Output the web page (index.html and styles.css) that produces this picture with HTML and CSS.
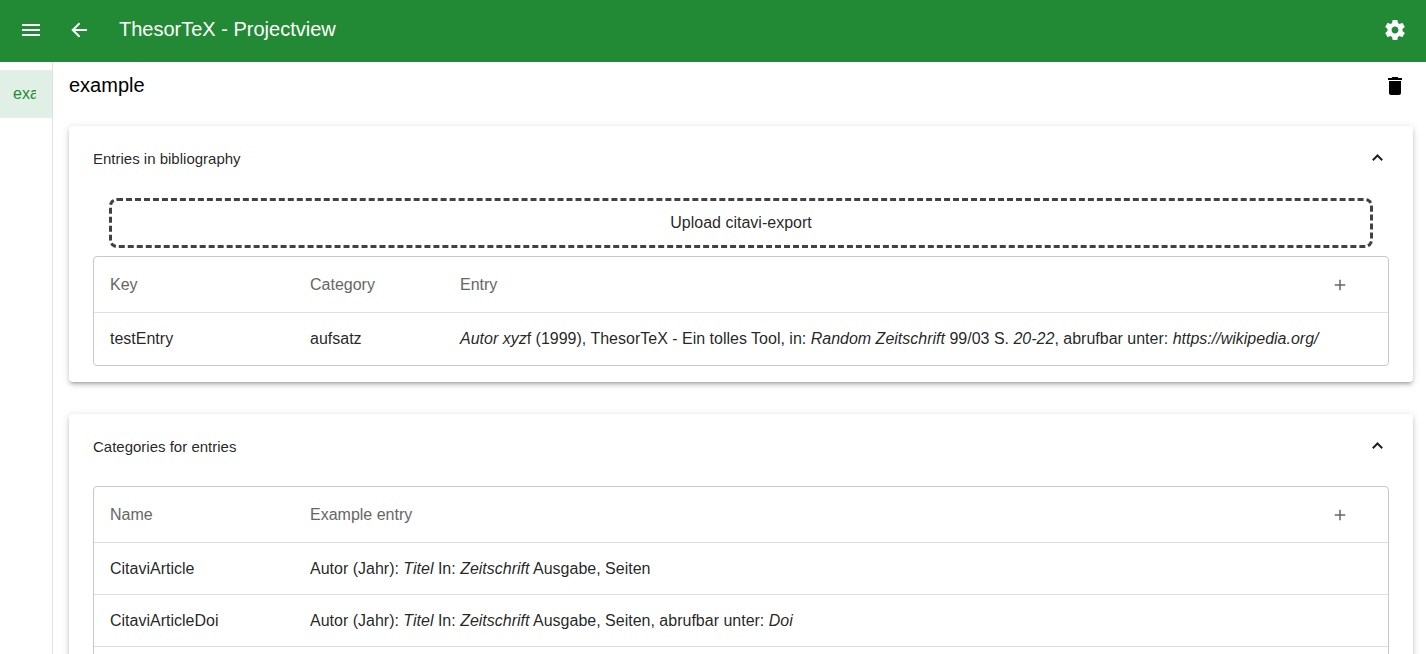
FILE: index.html
```html
<!DOCTYPE html>
<html lang="en">
<head>
<meta charset="utf-8">
<meta name="viewport" content="width=device-width, initial-scale=1">
<title>ThesorTeX - Projectview</title>
<link rel="stylesheet" href="styles.css">
</head>
<body>
<div class="app">
  <header class="toolbar">
    <button class="icon-button" type="button" aria-label="Menu"><svg class="icon" viewBox="0 0 24 24"><path d="M3 18h18v-2H3v2zm0-5h18v-2H3v2zm0-7v2h18V6H3z"/></svg></button>
    <button class="icon-button" type="button" aria-label="Back"><svg class="icon" viewBox="0 0 24 24"><path d="M20 11H8.2l5-5.1-1.3-1.4L4.3 12l7.6 7.5 1.3-1.4-5-5.1H20v-2z"/></svg></button>
    <span class="toolbar-title">ThesorTeX - Projectview</span>
    <button class="icon-button" type="button" aria-label="Settings"><svg class="icon" viewBox="0 0 24 24"><path d="M19.43 12.98c.04-.32.07-.64.07-.98s-.03-.66-.07-.98l2.11-1.65c.19-.15.24-.42.12-.64l-2-3.46c-.12-.22-.39-.3-.61-.22l-2.49 1c-.52-.4-1.08-.73-1.69-.98l-.38-2.65C14.46 2.18 14.25 2 14 2h-4c-.25 0-.46.18-.49.42l-.38 2.65c-.61.25-1.17.59-1.69.98l-2.49-1c-.23-.09-.49 0-.61.22l-2 3.46c-.13.22-.07.49.12.64l2.11 1.65c-.04.32-.07.65-.07.98s.03.66.07.98l-2.11 1.65c-.19.15-.24.42-.12.64l2 3.46c.12.22.39.3.61.22l2.49-1c.52.4 1.08.73 1.69.98l.38 2.65c.03.24.24.42.49.42h4c.25 0 .46-.18.49-.42l.38-2.65c.61-.25 1.17-.59 1.69-.98l2.49 1c.23.09.49 0 .61-.22l2-3.46c.12-.22.07-.49-.12-.64l-2.11-1.65zM12 15.5c-1.93 0-3.5-1.57-3.5-3.5s1.57-3.5 3.5-3.5 3.5 1.57 3.5 3.5-1.57 3.5-3.5 3.5z"/></svg></button>
  </header>
  <div class="workspace">
    <nav class="sidebar">
      <a class="sidebar-item" href="#example"><span class="sidebar-label">example</span></a>
    </nav>
    <main class="content">
      <div class="project-head">
        <h1 class="project-name">example</h1>
        <button class="icon-button" type="button" aria-label="Delete project"><svg class="icon" viewBox="0 0 24 24"><path d="M6 19c0 1.1.9 2 2 2h8c1.1 0 2-.9 2-2V7H6v12zM19 4h-3.5l-1-1h-5l-1 1H5v2h14V4z"/></svg></button>
      </div>
      <div class="panels">
        <section class="panel">
          <button class="panel-head" type="button" aria-expanded="true">
            <span>Entries in bibliography</span>
            <svg class="chevron" viewBox="0 0 24 24"><path d="M7.8 14.2l4.7-4.7 4.7 4.7"/></svg>
          </button>
          <div class="panel-body">
            <button class="upload" type="button">Upload citavi-export</button>
            <table class="grid">
              <colgroup><col class="col-key"><col class="col-category"><col><col class="col-action"></colgroup>
              <thead>
                <tr><th>Key</th><th>Category</th><th>Entry</th><th><button class="add-button" type="button" aria-label="Add entry"><svg class="icon-small" viewBox="0 0 24 24"><path d="M19 13h-6v6h-2v-6H5v-2h6V5h2v6h6v2z"/></svg></button></th></tr>
              </thead>
              <tbody>
                <tr><td>testEntry</td><td>aufsatz</td><td colspan="2"><i>Autor xyz</i>f (1999), ThesorTeX - Ein tolles Tool, in: <i>Random Zeitschrift</i> 99/03 S. <i>20-22</i>, abrufbar unter: <i>https://wikipedia.org/</i></td></tr>
              </tbody>
            </table>
          </div>
        </section>
        <section class="panel">
          <button class="panel-head" type="button" aria-expanded="true">
            <span>Categories for entries</span>
            <svg class="chevron" viewBox="0 0 24 24"><path d="M7.8 14.2l4.7-4.7 4.7 4.7"/></svg>
          </button>
          <div class="panel-body">
            <table class="grid">
              <colgroup><col class="col-key"><col><col class="col-action"></colgroup>
              <thead>
                <tr><th>Name</th><th>Example entry</th><th><button class="add-button" type="button" aria-label="Add category"><svg class="icon-small" viewBox="0 0 24 24"><path d="M19 13h-6v6h-2v-6H5v-2h6V5h2v6h6v2z"/></svg></button></th></tr>
              </thead>
              <tbody>
                <tr><td>CitaviArticle</td><td colspan="2">Autor (Jahr): <i>Titel</i> In: <i>Zeitschrift</i> Ausgabe, Seiten</td></tr>
                <tr><td>CitaviArticleDoi</td><td colspan="2">Autor (Jahr): <i>Titel</i> In: <i>Zeitschrift</i> Ausgabe, Seiten, abrufbar unter: <i>Doi</i></td></tr>
                <tr><td></td><td colspan="2"></td></tr>
              </tbody>
            </table>
          </div>
        </section>
      </div>
    </main>
  </div>
</div>
</body>
</html>
```
FILE: styles.css
```css
* { box-sizing: border-box; }

body {
  margin: 0;
  background: #fff;
  color: #000;
  font-family: "Liberation Sans", Arial, Helvetica, sans-serif;
  font-size: 16px;
}

button {
  margin: 0;
  padding: 0;
  border: 0;
  background: none;
  color: inherit;
  font: inherit;
  cursor: pointer;
}

.app {
  display: flex;
  flex-direction: column;
  height: 100vh;
}

.toolbar {
  display: flex;
  flex: none;
  align-items: center;
  padding: 6px 7px 8px;
  background: #228a34;
  color: #fff;
}

.toolbar-title {
  flex: 1;
  padding: 0 0 2px 16px;
  font-size: 20px;
  line-height: 32px;
}

.icon-button {
  display: flex;
  flex: none;
  align-items: center;
  justify-content: center;
  width: 48px;
  height: 48px;
}

.icon {
  width: 24px;
  height: 24px;
  fill: currentColor;
}

.workspace {
  display: flex;
  flex: 1;
  min-height: 0;
}

.sidebar {
  flex: none;
  width: 53px;
  padding-top: 8px;
  border-right: 1px solid #e0e0e0;
}

.sidebar-item {
  display: flex;
  align-items: center;
  height: 48px;
  padding: 0 16px 0 13px;
  background: #e1f0e6;
  color: #228a34;
  text-decoration: none;
}

.sidebar-label {
  overflow: hidden;
  white-space: nowrap;
}

.content {
  flex: 1;
  min-width: 0;
  overflow-y: auto;
  scrollbar-width: none;
}

.project-head {
  display: flex;
  align-items: center;
  justify-content: space-between;
  padding: 0 7px 0 16px;
}

.project-name {
  margin: 0;
  padding-bottom: 2px;
  font-size: 20px;
  font-weight: 400;
  line-height: 32px;
}

.panels {
  display: flex;
  flex-direction: column;
  gap: 32px;
  padding: 16px 13px 16px 16px;
}

.panel {
  border-radius: 4px;
  background: #fff;
  color: rgba(0, 0, 0, 0.87);
  box-shadow: 0 3px 3px -2px rgba(0, 0, 0, 0.2), 0 3px 4px 0 rgba(0, 0, 0, 0.14), 0 1px 8px 0 rgba(0, 0, 0, 0.12);
}

.panel-head {
  display: flex;
  align-items: center;
  justify-content: space-between;
  width: 100%;
  height: 64px;
  padding: 0 24px;
  font-size: 15px;
  text-align: left;
}

.chevron {
  width: 24px;
  height: 24px;
  fill: none;
  stroke: currentColor;
  stroke-width: 2;
}

.panel-body {
  display: flex;
  flex-direction: column;
  gap: 8px;
  padding: 8px 24px 16px;
}

.upload {
  height: 50px;
  margin: 0 16px;
  border: 3px dashed #424242;
  border-radius: 8px;
}

.grid {
  width: 100%;
  border: 1px solid #c8c8c8;
  border-radius: 4px;
  border-spacing: 0;
  table-layout: fixed;
}

.col-key { width: 216px; }
.col-category { width: 150px; }
.col-action { width: 72px; }

.grid th,
.grid td {
  height: 52px;
  padding: 0;
  border-bottom: 1px solid #e0e0e0;
  text-align: left;
}

.grid th {
  height: 56px;
  color: #666;
  font-weight: 400;
}

.grid th:first-child,
.grid td:first-child {
  padding-left: 16px;
}

.grid tbody tr:last-child td {
  border-bottom: 0;
}

.add-button {
  display: flex;
  align-items: center;
  justify-content: center;
  width: 48px;
  height: 48px;
}

.icon-small {
  width: 18px;
  height: 18px;
  fill: currentColor;
}
```
